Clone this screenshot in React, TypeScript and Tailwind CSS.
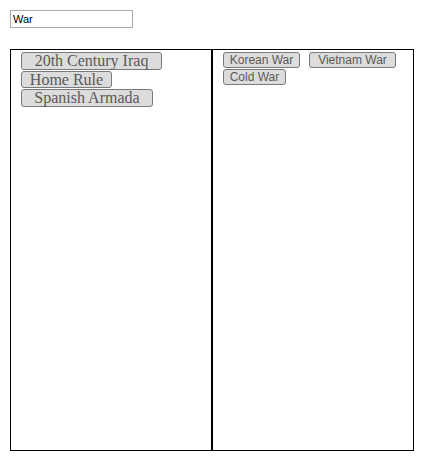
import React from "react";

const btnBase =
  "box-border flex items-center justify-center rounded-[3px] border border-[#7a7a7a] bg-[#dcdcdc] text-[#5a5a5a] leading-none whitespace-nowrap";

export default function App() {
  return (
    <div className="w-[433px] h-[471px] bg-white">
      <div className="pt-[10px] pl-[10px]">
        <div className="box-border w-[123px] h-[18px] border border-[#aaa] flex items-center pl-[2px] text-[11px] text-black [font-family:'Liberation_Sans',Arial,sans-serif]">
          War
        </div>
      </div>
      <div className="flex pl-[10px] pt-[21px]">
        <div className="box-border w-[202px] h-[402px] border border-black pl-[10px] pt-[2px] flex flex-col items-start gap-[1px] [font-family:'Liberation_Serif','Times_New_Roman',serif] text-[16px]">
          <div className={`${btnBase} w-[141px] h-[18px]`}>20th Century Iraq</div>
          <div className={`${btnBase} w-[91px] h-[17px]`}>Home Rule</div>
          <div className={`${btnBase} w-[132px] h-[18px]`}>Spanish Armada</div>
        </div>
        <div className="box-border w-[202px] h-[402px] border border-black pl-[10px] pt-[2px] flex flex-wrap content-start gap-x-[9px] gap-y-[1px] [font-family:'Liberation_Sans',Arial,sans-serif] text-[12px]">
          <div className={`${btnBase} w-[77px] h-[16px]`}>Korean War</div>
          <div className={`${btnBase} w-[87px] h-[16px]`}>Vietnam War</div>
          <div className={`${btnBase} w-[63px] h-[16px]`}>Cold War</div>
        </div>
      </div>
    </div>
  );
}
